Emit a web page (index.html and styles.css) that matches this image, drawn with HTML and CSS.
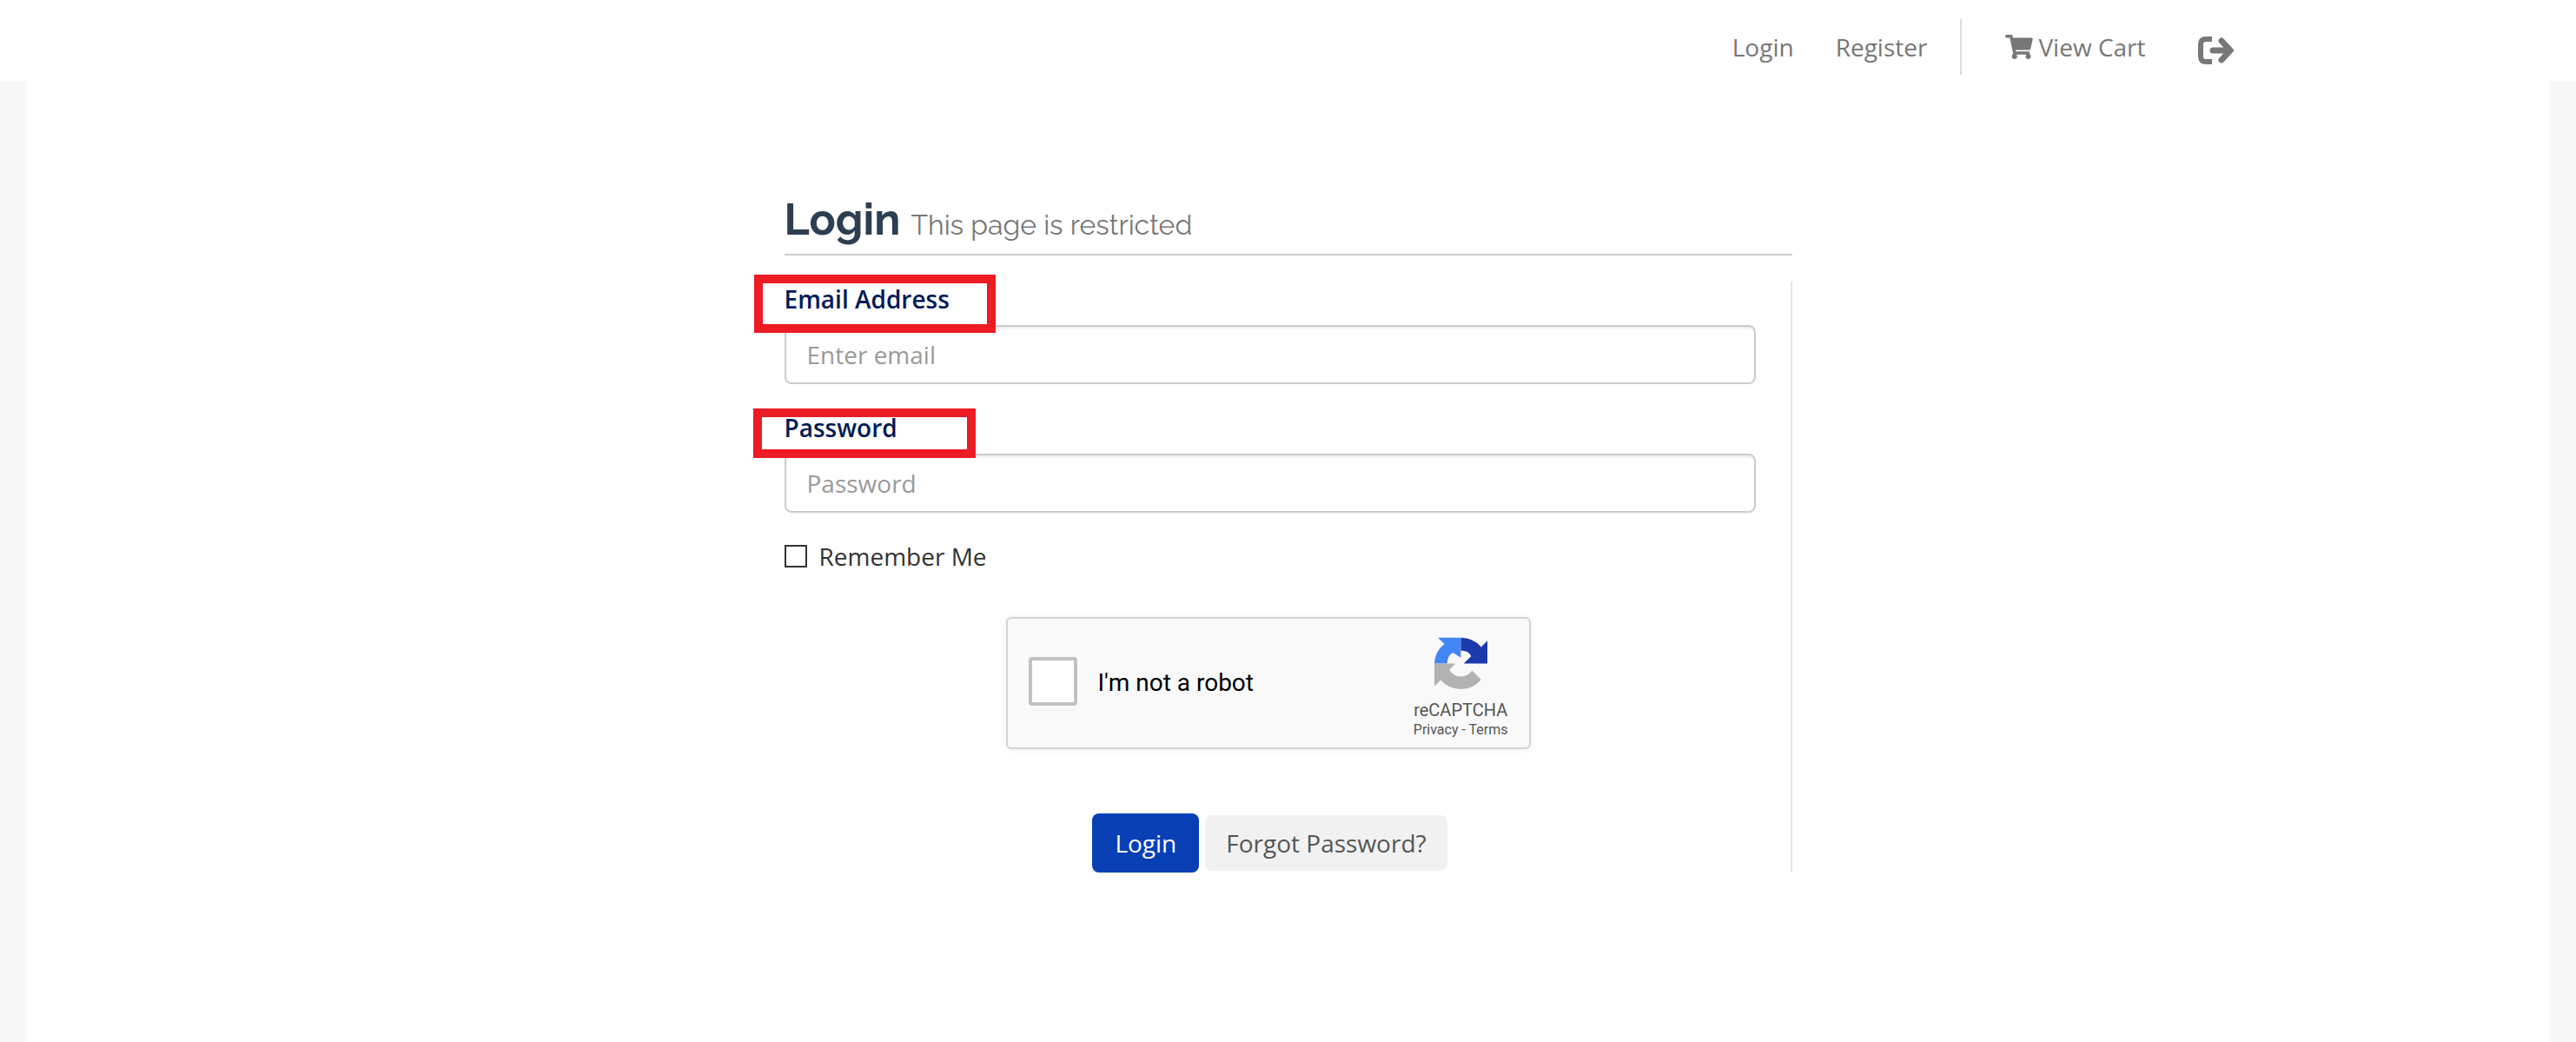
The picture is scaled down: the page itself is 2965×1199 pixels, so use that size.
FILE: index.html
```html
<!DOCTYPE html>
<html lang="en">
<head>
    <meta charset="utf-8">
    <title>Login</title>
    <link rel="stylesheet" href="styles.css">
</head>
<body>

<header class="site-header">
    <nav class="top-nav">
        <a href="#">Login</a>
        <a href="#">Register</a>
        <span class="divider"></span>
        <a href="#" class="cart-link">
            <svg class="icon-cart" viewBox="0 0 576 512"><path fill="currentColor" d="M528.12 301.319l47.273-208C578.806 78.301 567.391 64 551.99 64H159.208l-9.166-44.81C147.758 8.021 137.93 0 126.529 0H24C10.745 0 0 10.745 0 24v16c0 13.255 10.745 24 24 24h69.883l70.248 343.435C147.325 417.1 136 435.222 136 456c0 30.928 25.072 56 56 56s56-25.072 56-56c0-15.674-6.447-29.835-16.824-40h209.647C430.447 426.165 424 440.326 424 456c0 30.928 25.072 56 56 56s56-25.072 56-56c0-22.172-12.888-41.332-31.579-50.405l5.517-24.276c3.413-15.018-8.002-29.319-23.403-29.319H218.117l-6.545-32h293.145c11.206 0 20.92-7.754 23.403-18.681z"/></svg>
            View Cart
        </a>
        <a href="#" class="exit-link" aria-label="Log out">
            <svg class="icon-exit" viewBox="0 0 42 32" fill="none" stroke="currentColor" stroke-width="6"><path stroke-linejoin="round" d="M16 3H9Q3 3 3 9V23Q3 29 9 29H16"/><path stroke-linecap="round" stroke-width="7" d="M17 16H36"/><path stroke-linecap="round" stroke-linejoin="miter" stroke-width="7" d="M27 5L37 16L27 27"/></svg>
        </a>
    </nav>
</header>

<main class="page">
    <div class="container">
        <h1 class="page-title">Login <small>This page is restricted</small></h1>

        <form class="login-form">
            <div class="form-group">
                <label for="email">Email Address</label>
                <input id="email" class="form-control" type="email" placeholder="Enter email">
                <span class="mark mark-email"></span>
            </div>
            <div class="form-group">
                <label for="password">Password</label>
                <input id="password" class="form-control" type="password" placeholder="Password">
                <span class="mark mark-password"></span>
            </div>
            <div class="remember">
                <input id="remember" type="checkbox">
                <label for="remember">Remember Me</label>
            </div>

            <div class="captcha-wrap">
                <div class="captcha">
                    <input id="robot" type="checkbox">
                    <label for="robot">I'm not a robot</label>
                    <div class="captcha-brand">
                        <svg class="captcha-logo" viewBox="0 0 64 64">
                            <path fill="#1c3aa9" d="M64 32V4.500l-7.600 7.600A32 32 0 0 0 31.900.9V16.500c5.500-.1 9.500 1 12.500 6.500L35.500 32z"/>
                            <path fill="#4285f4" d="M31.900.9H4.400L12 8.500A32 32 0 0 0 0 32H15.500c.5-7 2.500-11 7-13L31.900 25z"/>
                            <path fill="#b2b2b2" d="M0 32V59.500l7.600-7.600A32 32 0 0 0 56.500 51.500L45.500 40.500A16 16 0 0 1 18 39.500L25.500 32z"/>
                        </svg>
                        <span class="captcha-name">reCAPTCHA</span>
                        <span class="captcha-links"><a href="#">Privacy</a> - <a href="#">Terms</a></span>
                    </div>
                </div>
            </div>

            <div class="actions">
                <button type="submit" class="btn btn-primary">Login</button>
                <button type="button" class="btn btn-light">Forgot Password?</button>
            </div>
        </form>
    </div>
</main>

</body>
</html>
```
FILE: styles.css
```css
* {
    box-sizing: border-box;
}

body {
    margin: 0;
    min-height: 100vh;
    display: flex;
    flex-direction: column;
    background: #f7f7f7;
    color: #333;
    font-family: "Open Sans", sans-serif;
    font-size: 28px;
    line-height: 40px;
}

.site-header {
    background: #fff;
    padding: 22px 30px 7px;
}

.top-nav {
    display: flex;
    align-items: center;
    justify-content: flex-end;
    max-width: 2178px;
    height: 64px;
    margin: 0 auto;
}

.top-nav a {
    display: flex;
    align-items: center;
    color: #777;
    text-decoration: none;
    margin-left: 48px;
}

.divider {
    width: 2px;
    height: 64px;
    margin-left: 38px;
    background: #ddd;
}

.top-nav .cart-link {
    gap: 6px;
    margin-left: 50px;
}

.top-nav .exit-link {
    margin-left: 60px;
    padding-top: 8px;
}

.icon-cart {
    width: 32px;
    height: 28px;
}

.icon-exit {
    width: 42px;
    height: 32px;
}

.page {
    flex: 1;
    margin: 0 30px;
    padding: 127px 30px;
    background: #fff;
}

.container {
    max-width: 1160px;
    margin: 0 auto;
}

.page-title {
    margin: 0 0 30px;
    border-bottom: 2px solid #ccc;
    color: #2c3e50;
    font-family: Raleway, Lato, sans-serif;
    font-size: 50px;
    line-height: 66px;
    font-weight: bold;
}

.page-title small {
    color: #777;
    font-size: 32px;
    font-weight: normal;
}

.login-form {
    padding-right: 40px;
    border-right: 2px solid #e5e5e5;
}

.form-group {
    position: relative;
    margin-bottom: 30px;
}

.form-group label {
    display: block;
    margin-bottom: 10px;
    color: #001a57;
    font-weight: 600;
}

.form-control {
    display: block;
    width: 100%;
    height: 68px;
    padding: 0 24px;
    border: 2px solid #ccc;
    border-radius: 8px;
    background: #fff;
    box-shadow: inset 0 2px 2px rgba(0, 0, 0, 0.08);
    font: inherit;
}

.form-control::placeholder {
    color: #999;
    opacity: 1;
}

/* red frames round the two field labels */
.mark {
    position: absolute;
    border: 10px solid #ed1c24;
    pointer-events: none;
}

.mark-email {
    top: -8px;
    left: -35px;
    width: 278px;
    height: 67px;
}

.mark-password {
    top: -2px;
    left: -36px;
    width: 256px;
    height: 57px;
}

.remember {
    display: flex;
    align-items: center;
    gap: 14px;
    margin-bottom: 50px;
}

.remember input {
    appearance: none;
    width: 26px;
    height: 26px;
    margin: 0;
    border: 2px solid #333;
    background: #fff;
}

.captcha-wrap {
    width: 608px;
    margin: 0 auto 74px;
}

.captcha {
    display: flex;
    align-items: center;
    width: 604px;
    height: 152px;
    padding: 0 24px;
    border: 2px solid #d3d3d3;
    border-radius: 6px;
    background: #f9f9f9;
    box-shadow: 0 0 8px rgba(0, 0, 0, 0.08);
    color: #000;
    font-family: Roboto, sans-serif;
}

.captcha input {
    appearance: none;
    width: 56px;
    height: 56px;
    margin: 0 24px 4px 0;
    border: 4px solid #c1c1c1;
    border-radius: 4px;
    background: #fff;
}

.captcha-brand {
    display: flex;
    flex-direction: column;
    align-items: center;
    margin-left: auto;
    padding-top: 10px;
    color: #555;
}

.captcha-logo {
    width: 61px;
    height: 61px;
    margin-bottom: 10px;
}

.captcha-name {
    font-size: 20px;
    line-height: 26px;
}

.captcha-links {
    font-size: 16px;
    line-height: 20px;
}

.captcha-links a {
    color: #555;
    text-decoration: none;
}

.actions {
    display: flex;
    align-items: center;
    justify-content: center;
    gap: 7px;
}

.btn {
    border: 0;
    border-radius: 8px;
    font: inherit;
}

.btn-primary {
    padding: 14px 26px;
    background: #083fb5;
    color: #fff;
}

.btn-light {
    padding: 12px 24px;
    background: #f1f1f1;
    color: #555;
}
```
